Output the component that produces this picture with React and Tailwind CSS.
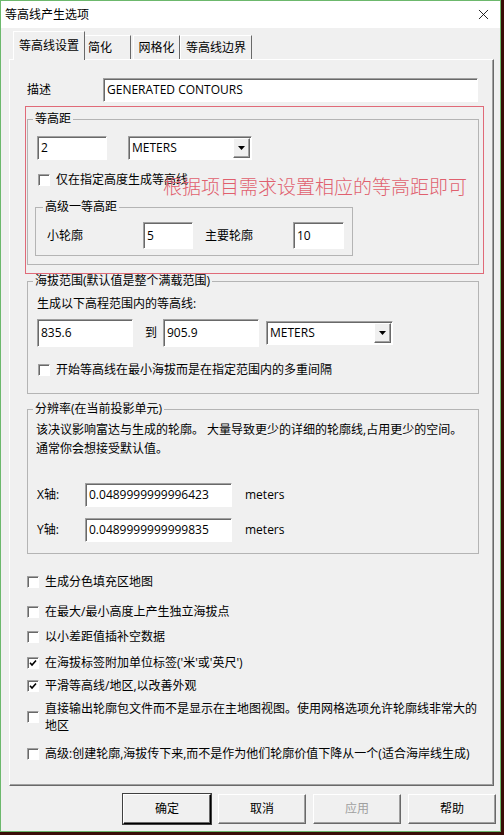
import React from "react";
import { X } from "lucide-react";

const sunken =
  "border border-t-[#a0a0a0] border-l-[#a0a0a0] border-r-white border-b-white shadow-[inset_1px_1px_0_#696969]";
const raised =
  "border border-t-white border-l-white border-r-[#696969] border-b-[#696969] shadow-[inset_-1px_-1px_0_#a0a0a0]";

function Field({ value, className = "" }) {
  return (
    <div className={`${sunken} bg-white flex items-center pl-[3px] ${className}`}>
      {value}
    </div>
  );
}

function Select({ className = "" }) {
  return (
    <div className={`${sunken} bg-white flex items-center ${className}`}>
      <span className="flex-1 pl-[3px]">METERS</span>
      <div className={`${raised} bg-[#f0f0f0] w-[17px] h-[20px] mr-[1px] flex items-center justify-center`}>
        <svg width="7" height="4" viewBox="0 0 7 4">
          <path d="M0 0h7L3.5 4z" fill="#000" />
        </svg>
      </div>
    </div>
  );
}

function Check({ checked }) {
  return (
    <div className={`${sunken} bg-white w-[12px] h-[12px] shrink-0 flex items-center justify-center`}>
      {checked && (
        <svg width="8" height="8" viewBox="0 0 8 8">
          <path d="M1 3.8L3 6L7 1.5" stroke="#000" strokeWidth="1.6" fill="none" />
        </svg>
      )}
    </div>
  );
}

function CheckRow({ checked, children, className = "" }) {
  return (
    <div className={`flex items-center gap-[6px] ${className}`}>
      <Check checked={checked} />
      <span>{children}</span>
    </div>
  );
}

function Button({ children, strong, disabled }) {
  return (
    <div
      className={`w-[88px] h-[30px] bg-[#f0f0f0] flex items-center justify-center ${
        strong
          ? "border border-t-white border-l-white border-r-black border-b-black shadow-[inset_-1px_-1px_0_#696969,0_0_0_1px_#404040]"
          : raised
      } ${disabled ? "text-[#a0a0a0]" : "text-black"}`}
    >
      {children}
    </div>
  );
}

export default function App() {
  return (
    <div className="w-[504px] h-[835px] bg-[#3a0d07] font-['Open_Sans','Noto_Sans_CJK_SC',sans-serif] text-[12px] leading-[16px] text-black">
      <div className="w-[501px] h-[832px] border border-[#6cb86c] bg-[#f0f0f0] flex flex-col">
        {/* title bar */}
        <div className="h-[27px] bg-white flex items-center justify-between pl-[4px] pr-[8px]">
          <span>等高线产生选项</span>
          <X size={17} strokeWidth={1.2} />
        </div>

        {/* tabs */}
        <div className="mt-[3px] ml-[12px] flex items-end h-[28px]">
          <div className="relative z-10 -mb-px w-[72px] h-[29px] bg-[#f0f0f0] border-t border-l border-white border-r border-r-[#696969] flex items-center justify-center">
            等高线设置
          </div>
          <div className="w-[46px] h-[24px] border-t border-white border-r border-r-[#696969] flex items-center pl-[3px]">
            简化
          </div>
          <div className="ml-[2px] w-[47px] h-[24px] border-t border-l border-white border-r border-r-[#696969] flex items-center justify-center">
            网格化
          </div>
          <div className="w-[72px] h-[24px] border-t border-l border-white border-r border-r-[#696969] flex items-center justify-center">
            等高线边界
          </div>
        </div>

        {/* tab panel */}
        <div className={`relative ml-[8px] w-[485px] h-[727px] ${raised}`}>
          <div className="mt-[18px] flex items-center">
            <span className="ml-[17px] w-[76px]">描述</span>
            <Field value="GENERATED CONTOURS" className="w-[375px] h-[24px]" />
          </div>

          <fieldset className="mt-[9px] ml-[17px] w-[452px] h-[154px] border border-[#b4b4b4]">
            <legend className="ml-[5px] px-[2px]">等高距</legend>
            <div className="mt-[9px] ml-[9px] flex items-center">
              <Field value="2" className="w-[70px] h-[24px]" />
              <Select className="ml-[21px] w-[124px] h-[24px]" />
            </div>
            <CheckRow className="mt-[12px] ml-[10px] gap-[5px]">仅在指定高度生成等高线</CheckRow>
            <fieldset className="mt-[11px] ml-[7px] w-[318px] h-[57px] border border-[#b4b4b4]">
              <legend className="ml-[7px] px-[2px]">高级一等高距</legend>
              <div className="mt-[7px] flex items-center">
                <span className="ml-[11px] w-[96px]">小轮廓</span>
                <Field value="5" className="w-[50px] h-[27px]" />
                <span className="ml-[12px] w-[88px]">主要轮廓</span>
                <Field value="10" className="w-[51px] h-[27px]" />
              </div>
            </fieldset>
          </fieldset>

          <fieldset className="mt-[8px] ml-[17px] w-[452px] h-[121px] border border-[#b4b4b4]">
            <legend className="ml-[5px] px-[2px]">海拔范围(默认值是整个满载范围)</legend>
            <p className="mt-[7px] ml-[9px]">生成以下高程范围内的等高线:</p>
            <div className="mt-[7px] ml-[9px] flex items-center">
              <Field value="835.6" className="w-[96px] h-[28px]" />
              <span className="ml-[12px] w-[18px]">到</span>
              <Field value="905.9" className="w-[96px] h-[28px]" />
              <Select className="ml-[7px] w-[127px] h-[24px]" />
            </div>
            <CheckRow className="mt-[15px] ml-[10px] gap-[5px]">
              开始等高线在最小海拔而是在指定范围内的多重间隔
            </CheckRow>
          </fieldset>

          <fieldset className="mt-[7px] ml-[17px] w-[452px] h-[153px] border border-[#b4b4b4]">
            <legend className="ml-[5px] px-[2px]">分辨率(在当前投影单元)</legend>
            <p className="mt-[3px] ml-[8px] leading-[19px]">
              该决议影响富达与生成的轮廓。 大量导致更少的详细的轮廓线,占用更少的空间。
              <br />
              通常你会想接受默认值。
            </p>
            <div className="mt-[25px] ml-[9px] flex items-center">
              <span className="w-[48px]">X轴:</span>
              <Field value="0.0489999999996423" className="w-[147px] h-[24px]" />
              <span className="ml-[13px]">meters</span>
            </div>
            <div className="mt-[11px] ml-[9px] flex items-center">
              <span className="w-[48px]">Y轴:</span>
              <Field value="0.0489999999999835" className="w-[147px] h-[24px]" />
              <span className="ml-[13px]">meters</span>
            </div>
          </fieldset>

          <div className="ml-[17px]">
            <CheckRow className="mt-[20px]">生成分色填充区地图</CheckRow>
            <CheckRow className="mt-[14px]">在最大/最小高度上产生独立海拔点</CheckRow>
            <CheckRow className="mt-[9px]">以小差距值插补空数据</CheckRow>
            <CheckRow checked className="mt-[10px]">在海拔标签附加单位标签('米'或'英尺')</CheckRow>
            <CheckRow checked className="mt-[7px]">平滑等高线/地区,以改善外观</CheckRow>
            <div className="mt-[6px] flex items-center gap-[6px] leading-[17px]">
              <Check />
              <span>
                直接输出轮廓包文件而不是显示在主地图视图。使用网格选项允许轮廓线非常大的
                <br />
                地区
              </span>
            </div>
            <CheckRow className="mt-[12px]">
              高级:创建轮廓,海拔传下来,而不是作为他们轮廓价值下降从一个(适合海岸线生成)
            </CheckRow>
          </div>

          {/* annotation overlay */}
          <div className="absolute left-[15px] top-[46px] w-[459px] h-[168px] border border-[#e06a78] pointer-events-none" />
          <div className="absolute left-[153px] top-[116px] text-[19px] leading-[24px] font-light text-[#e0606e] font-['Liberation_Serif','Noto_Sans_CJK_SC',serif]">
            根据项目需求设置相应的等高距即可
          </div>
        </div>

        {/* buttons */}
        <div className="mt-[8px] ml-[122px] flex gap-[7px]">
          <Button strong>确定</Button>
          <Button>取消</Button>
          <Button disabled>应用</Button>
          <Button>帮助</Button>
        </div>
      </div>
    </div>
  );
}
